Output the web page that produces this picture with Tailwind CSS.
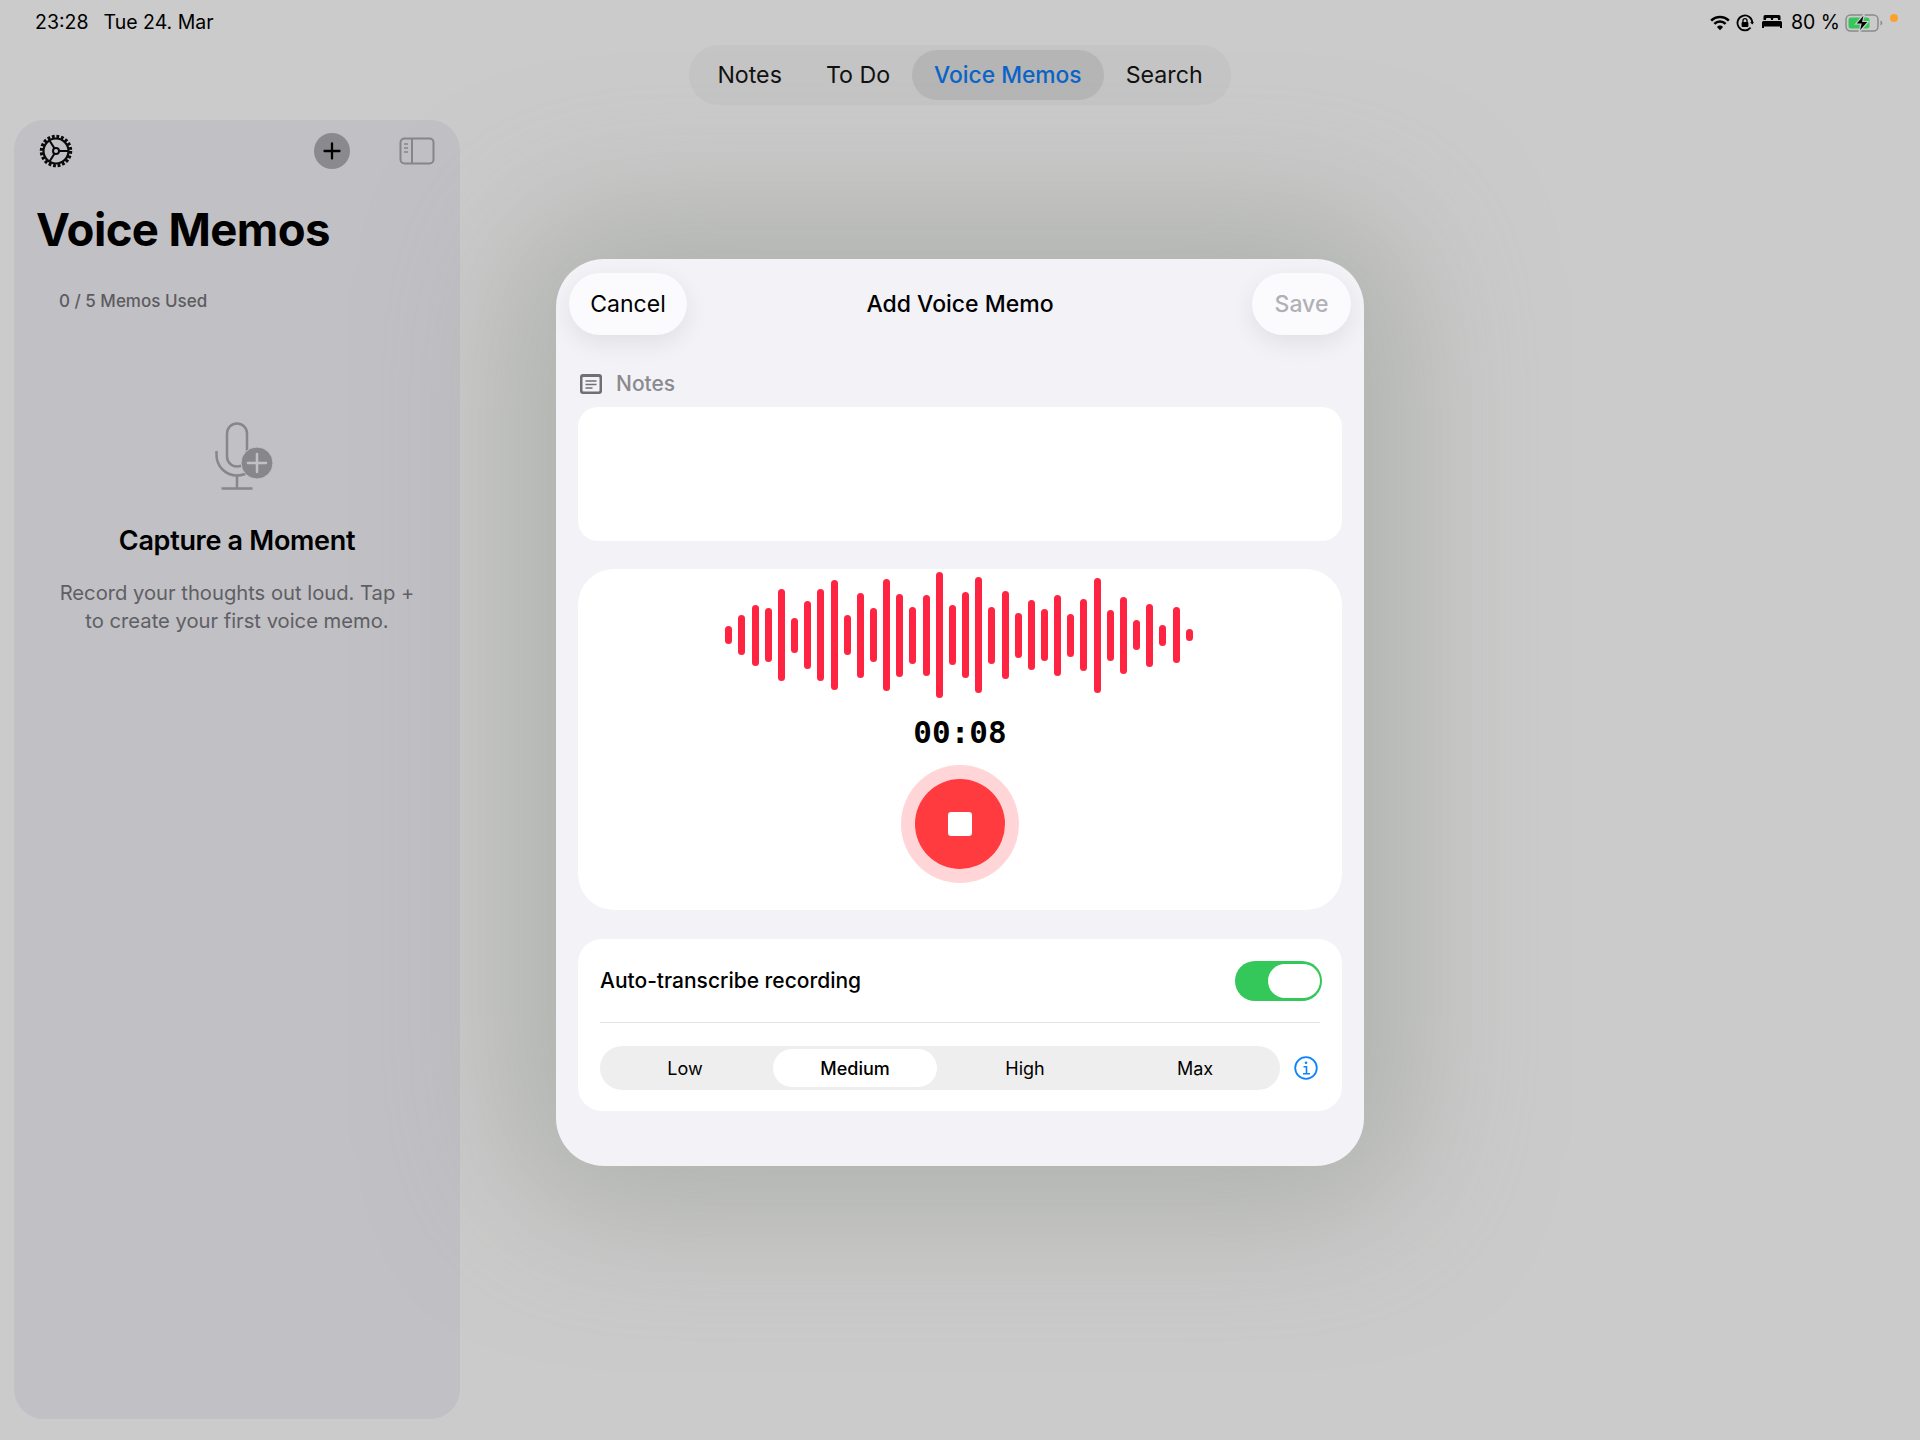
<!DOCTYPE html>
<html lang="en">
<head>
  <meta charset="UTF-8">
  <title>Voice Memos</title>
  <script src="https://cdn.jsdelivr.net/npm/@tailwindcss/browser@4"></script>
</head>
<body class="bg-[#cbcbcb] text-black font-['Inter',sans-serif]">
<div class="relative w-[1920px] h-[1440px] overflow-hidden">

  <!-- Status bar -->
  <div class="flex items-center justify-between h-[45px] pl-[35px] pr-[22px] text-[19.500px] leading-none">
    <div class="flex gap-[15px]"><span>23:28</span><span>Tue 24. Mar</span></div>
    <div class="flex items-center">
      <svg width="20" height="16" viewBox="0 0 21 16" fill="none" stroke="#000" stroke-width="2.600">
        <path d="M1.200 5.600a13 13 0 0 1 18.600 0"/>
        <path d="M4.600 9a8.200 8.200 0 0 1 11.800 0"/>
        <path d="M10.500 15.500l-3.200-3.400a4.400 4.400 0 0 1 6.400 0z" fill="#000" stroke="none"/>
      </svg>
      <svg class="ml-[6px]" width="18" height="18" viewBox="0 0 18 18" fill="none" stroke="#000" stroke-width="1.800">
        <path d="M14.600 13.600A7.400 7.400 0 1 1 16.300 9"/>
        <path d="M14 8.200l2.300 2.400 1.700-2.400" fill="#000" stroke="none"/>
        <rect x="5.600" y="8" width="6.800" height="5" rx="1" fill="#000" stroke="none"/>
        <path d="M7 8V6.600a2 2 0 0 1 4 0V8" stroke-width="1.300"/>
      </svg>
      <svg class="ml-[8px]" width="20" height="15" viewBox="0 0 20 15" fill="#000">
        <path d="M3 0h14a1.500 1.500 0 0 1 1.500 1.500V5H16V4a1 1 0 0 0-1-1h-3a1 1 0 0 0-1 1v1H9V4a1 1 0 0 0-1-1H5a1 1 0 0 0-1 1v1H1.500V1.500A1.500 1.500 0 0 1 3 0z"/>
        <path d="M1.500 6h17A1.500 1.500 0 0 1 20 7.500V13h-2v-1.500H2V13H0V7.500A1.500 1.500 0 0 1 1.500 6z"/>
      </svg>
      <span class="ml-[9px]">80 %</span>
      <svg class="ml-[5px]" width="38" height="20" viewBox="0 0 38 20" fill="none">
        <rect x="1" y="2" width="32" height="16" rx="4.500" stroke="#8b8b8b" stroke-width="1.500"/>
        <rect x="3.500" y="4.500" width="21" height="11" rx="2.500" fill="#34c759"/>
        <path d="M35.500 7.500c1.300.4 1.800 1.300 1.800 2.500s-.5 2.100-1.800 2.500z" fill="#8b8b8b"/>
        <path d="M19.500 0.500L10.500 11.200h5.400l-2 8.300L23.500 8.500h-5.700z" fill="#000" stroke="#cbcbcb" stroke-width="1.200"/>
      </svg>
      <span class="ml-[7px] mb-[10px] w-[8px] h-[8px] rounded-full bg-[#ff9f2e]"></span>
    </div>
  </div>

  <!-- Top tabs -->
  <div class="flex justify-center">
    <nav class="flex items-center h-[60px] px-[6px] rounded-full bg-[#c5c5c5] text-[23.200px] text-[#111]">
      <span class="px-[22px]">Notes</span>
      <span class="px-[22px]">To Do</span>
      <span class="flex items-center h-[50px] px-[22px] rounded-full bg-[#b5b6b5] text-[#0a64c8] text-[22.800px] font-medium">Voice Memos</span>
      <span class="px-[22px]">Search</span>
    </nav>
  </div>

  <!-- Sidebar -->
  <aside class="ml-[14px] mt-[15px] w-[446px] h-[1299px] rounded-[30px] bg-[#c1c0c5]">
    <div class="flex items-center h-[61px] pl-[25px] pr-[25px]">
      <svg width="34" height="34" viewBox="0 0 34 34" fill="none" stroke="#0a0a0a">
        <circle cx="17" cy="17" r="14.500" stroke-width="3.500" stroke-dasharray="2.800 1.755"/>
        <circle cx="17" cy="17" r="12.500" stroke-width="2.200"/>
        <circle cx="17" cy="17" r="3" stroke-width="2"/>
        <path d="M15.500 14.400L10.500 6.500M15.500 19.600L10.500 27.500M20 17H29.500" stroke-width="2"/>
      </svg>
      <span class="ml-auto flex items-center justify-center w-[36px] h-[36px] rounded-full bg-[#8a8a8e]">
        <svg width="18" height="18" viewBox="0 0 18 18" stroke="#000" stroke-width="2.300" stroke-linecap="round"><path d="M9 1.500v15M1.500 9h15"/></svg>
      </span>
      <svg class="ml-[49px]" width="36" height="28" viewBox="0 0 36 28" fill="none" stroke="#87878b" stroke-width="2">
        <rect x="1.500" y="1.500" width="33" height="25" rx="4"/>
        <path d="M13 1.500v25"/>
        <path d="M5 7h4M5 11h4M5 15h4" stroke-width="1.500"/>
      </svg>
    </div>
    <h1 class="mt-[21px] ml-[22px] text-[45.500px] leading-[56px] font-bold tracking-[-0.6px]">Voice Memos</h1>
    <p class="mt-[31px] ml-[45px] text-[17px] leading-[24px] font-medium text-[#5c5c60]">0 / 5 Memos Used</p>

    <div class="flex flex-col items-center mt-[109px]">
      <svg class="ml-[16px]" width="62" height="70" viewBox="0 0 62 70" fill="none" stroke="#87878b" stroke-width="2.500">
        <rect x="13" y="1.500" width="20" height="43" rx="10"/>
        <path d="M2.500 29v4a20.500 20.500 0 0 0 41 0"/>
        <path d="M23 53.500v12M7.500 66.500h31"/>
        <circle cx="43" cy="41" r="16" fill="#87878b" stroke="#c1c0c5" stroke-width="1"/>
        <path d="M43 32v18M34 41h18" stroke="#c1c0c5" stroke-width="2.500" stroke-linecap="round"/>
      </svg>
      <h2 class="mt-[31px] text-[27px] leading-[36px] font-semibold tracking-[-0.3px]">Capture a Moment</h2>
      <p class="mt-[20px] text-center text-[20.200px] leading-[28px] text-[#5f5f63]">Record your thoughts out loud. Tap +<br>to create your first voice memo.</p>
    </div>
  </aside>

  <!-- Add Voice Memo sheet -->
  <section class="absolute left-[556px] top-[259px] w-[808px] h-[907px] rounded-[48px] bg-[#f2f2f7] shadow-[0_0_140px_40px_rgba(150,155,145,0.55)] px-[22px]">
    <div class="relative flex items-center justify-between h-[62px] mt-[14px] -mx-[9px] text-[23px]">
      <button class="h-[62px] w-[118px] rounded-full bg-[#fbfbfd] shadow-[0_8px_24px_rgba(0,0,0,0.08)]">Cancel</button>
      <span class="absolute left-0 right-0 text-center font-medium pointer-events-none">Add Voice Memo</span>
      <button class="h-[62px] w-[99px] rounded-full bg-[#fbfbfd] shadow-[0_8px_24px_rgba(0,0,0,0.08)] text-[#b0b0b5] font-medium">Save</button>
    </div>

    <div class="flex items-center h-[30px] mt-[34px] pl-[2px] text-[21px] font-medium text-[#8a8a8e]">
      <svg width="22" height="20" viewBox="0 0 22 20" fill="none">
        <rect x="0" y="0" width="22" height="20" rx="3" fill="#6f6f74"/>
        <rect x="2.500" y="3" width="17" height="14.500" rx="1" fill="#f2f2f7"/>
        <path d="M5.500 7h11M5.500 10.500h11M5.500 14h7" stroke="#6f6f74" stroke-width="1.500"/>
      </svg>
      <span class="ml-[14px]">Notes</span>
    </div>
    <div class="h-[134px] mt-[8px] rounded-[20px] bg-white"></div>

    <!-- Recorder -->
    <div class="flex flex-col items-center h-[341px] mt-[28px] pt-[2px] rounded-[36px] bg-white">
      <div id="wave" class="flex items-center justify-center gap-[6.170px] h-[128px] -ml-[2px]"></div>
      <div class="mt-[15px] font-['DejaVu_Sans_Mono',monospace] text-[31px] leading-[36px] font-bold">00:08</div>
      <div class="flex items-center justify-center mt-[15px] w-[118px] h-[118px] rounded-full bg-[#ffd5d7]">
        <div class="flex items-center justify-center w-[90px] h-[90px] rounded-full bg-[#ff3b3f]">
          <div class="w-[24px] h-[24px] rounded-[3px] bg-white"></div>
        </div>
      </div>
    </div>

    <!-- Transcribe options -->
    <div class="h-[172px] mt-[29px] px-[22px] rounded-[24px] bg-white">
      <div class="flex items-center justify-between h-[84px] border-b-[1.500px] border-[#e3e3e6]">
        <span class="text-[21px] font-medium">Auto-transcribe recording</span>
        <span class="flex justify-end items-center w-[87px] h-[40px] -mr-[2px] pr-[2px] rounded-full bg-[#34c759]">
          <span class="w-[52px] h-[34px] rounded-full bg-white"></span>
        </span>
      </div>
      <div class="flex items-center justify-between mt-[23px]">
        <div class="grid grid-cols-4 items-center w-[680px] h-[44px] rounded-full bg-[#eeeeee] text-[18px] text-center">
          <span>Low</span>
          <span class="flex items-center justify-center h-[38px] mx-[3px] rounded-full bg-white font-medium">Medium</span>
          <span>High</span>
          <span>Max</span>
        </div>
        <svg class="mr-[2px]" width="24" height="24" viewBox="0 0 24 24" fill="none" stroke="#0a84ff" stroke-width="1.800">
          <circle cx="12" cy="12" r="10.800"/>
          <path d="M9.500 10.800H12.500V17.500M9 17.800h7" stroke-width="1.600"/>
          <circle cx="12" cy="6.800" r="1.300" fill="#0a84ff" stroke="none"/>
        </svg>
      </div>
    </div>
  </section>
</div>

<script>
  // Waveform bar heights, left to right
  const heights = [18,40,61,54,92,35,68,92,110,40,85,54,112,83,57,81,126,60,86,116,57,88,45,70,52,81,43,72,115,51,77,30,63,21,56,12];
  const wave = document.getElementById("wave");
  heights.forEach(h => {
    const bar = document.createElement("div");
    bar.className = "w-[7px] rounded-full bg-[#ff2442]";
    bar.style.height = h + "px";
    wave.appendChild(bar);
  });
</script>
</body>
</html>
